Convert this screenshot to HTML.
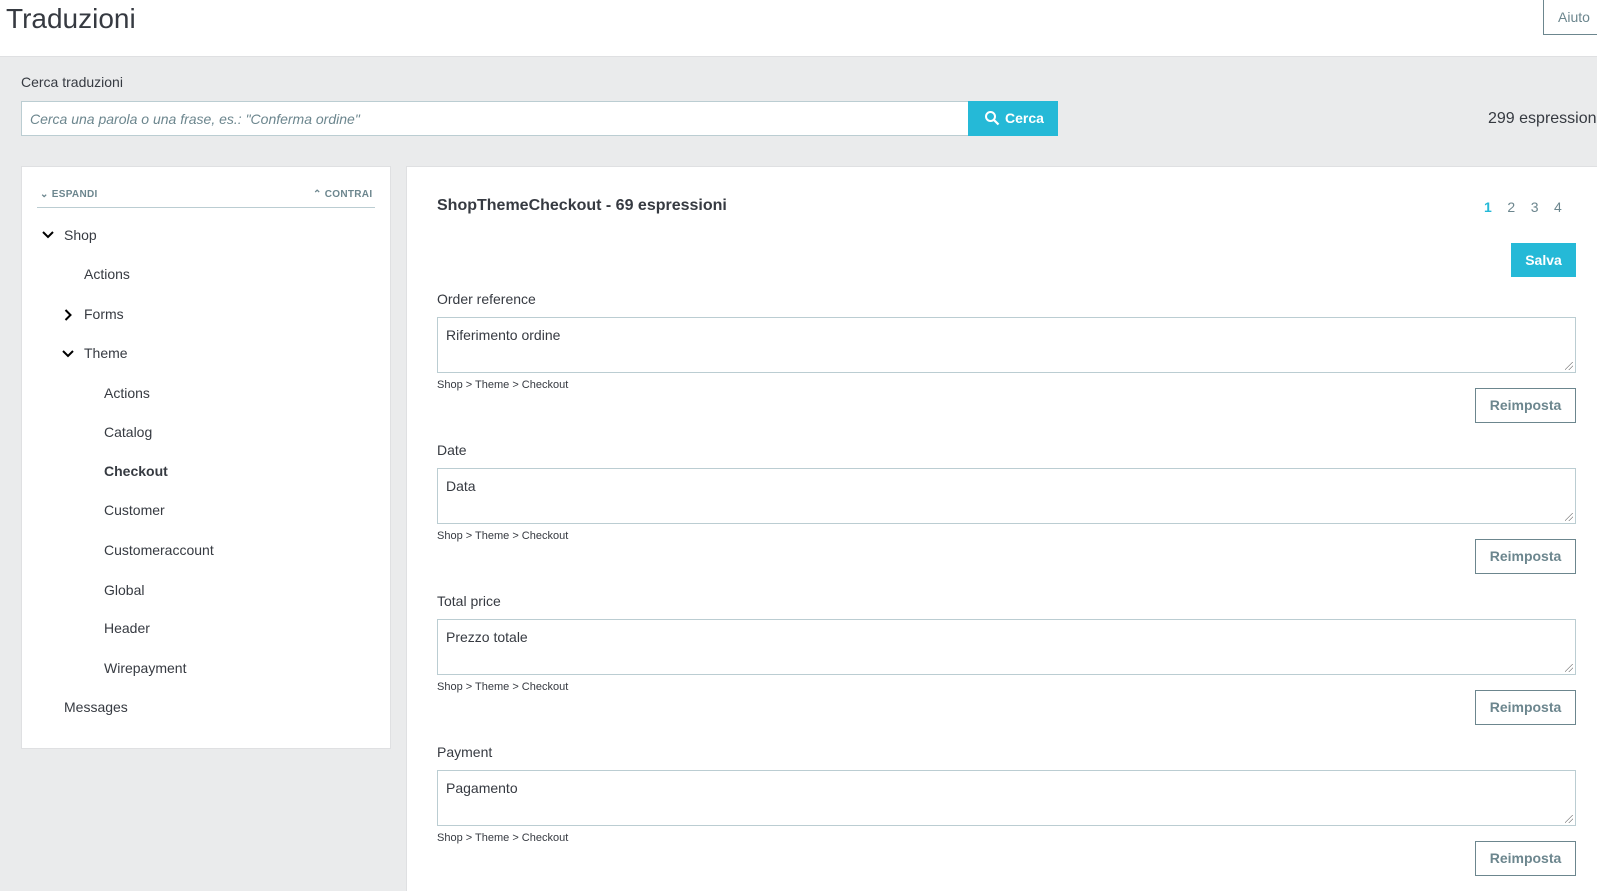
<!DOCTYPE html>
<html style="overflow:hidden;height:891px"><head><meta charset="utf-8"><style>
*{box-sizing:border-box;margin:0;padding:0}
body{width:1597px;height:891px;overflow:hidden;background:#eaebec;font-family:"Liberation Sans",sans-serif;color:#363a41;position:relative;font-size:14px}
.a{position:absolute;white-space:nowrap}
.hdr{left:0;top:0;width:1597px;height:57px;background:#fff;border-bottom:1px solid #dfe0e2}
.ta{position:absolute;left:437px;width:1139px;height:56px;background:#fff;border:1px solid #bbcdd2;padding:9px 8px;font-size:14px}
.ta:after{content:"";position:absolute;right:2px;bottom:2px;width:8px;height:8px;background:linear-gradient(135deg,transparent 45%,#888 46%,#888 52%,transparent 53%,transparent 70%,#888 71%,#888 77%,transparent 78%)}
.rs{position:absolute;left:1475px;width:101px;height:35px;border:1px solid #6c868e;background:#fff;color:#6c868e;font-size:14px;font-weight:bold;text-align:center;line-height:33px}
.bc{font-size:11px;color:#363a41}
.tree{font-size:14px}
</style></head><body>
<div class="a hdr"></div>
<div class="a" style="left:6px;top:3px;font-size:28px;color:#363a41">Traduzioni</div>
<div class="a" style="left:1543px;top:0;width:54px;height:35px;border:1px solid #6c868e;border-top:none;border-right:none;background:#fff;color:#6c868e;font-size:14px;padding:9px 0 0 14px">Aiuto</div>
<div class="a" style="left:21px;top:74px;font-size:14px">Cerca traduzioni</div>
<div class="a" style="left:21px;top:101px;width:948px;height:35px;background:#fff;border:1px solid #bbcdd2;padding:9px 8px;font-style:italic;color:#6c868e;font-size:14px">Cerca una parola o una frase, es.: "Conferma ordine"</div>
<div class="a" style="left:968px;top:101px;width:90px;height:35px;background:#25b9d7;color:#fff;font-weight:bold;font-size:14px;padding:9px 0 0 16px"><svg width="16" height="16" viewBox="0 0 16 16" style="vertical-align:-3px;margin-right:5px"><circle cx="6.5" cy="6.5" r="4.5" fill="none" stroke="#fff" stroke-width="2"/><path d="M10 10l4.5 4.5" stroke="#fff" stroke-width="2.2"/></svg>Cerca</div>
<div class="a" style="left:1488px;top:110px;font-size:16px">299 espressioni</div>

<div class="a" style="left:21px;top:166px;width:370px;height:583px;background:#fff;border:1px solid #dfe0e2"></div>
<div class="a" style="left:40px;top:189px;font-size:10px;font-weight:bold;color:#6c868e;letter-spacing:.3px">&#8964; ESPANDI</div>
<div class="a" style="left:313px;top:189px;font-size:10px;font-weight:bold;color:#6c868e;letter-spacing:.3px">&#8963; CONTRAI</div>
<div class="a" style="left:37px;top:207px;width:338px;height:1px;background:#bbcdd2"></div>
<div class="tree">
<svg class="a" style="left:42px;top:231px" width="12" height="8"><path d="M1 1l5 5 5-5" fill="none" stroke="#000" stroke-width="2"/></svg>
<div class="a" style="left:64px;top:227px">Shop</div>
<div class="a" style="left:84px;top:266px">Actions</div>
<svg class="a" style="left:64px;top:309px" width="8" height="12"><path d="M1.5 1l5 5-5 5" fill="none" stroke="#000" stroke-width="2"/></svg>
<div class="a" style="left:84px;top:306px">Forms</div>
<svg class="a" style="left:62px;top:350px" width="12" height="8"><path d="M1 1l5 5 5-5" fill="none" stroke="#000" stroke-width="2"/></svg>
<div class="a" style="left:84px;top:345px">Theme</div>
<div class="a" style="left:104px;top:385px">Actions</div>
<div class="a" style="left:104px;top:424px">Catalog</div>
<div class="a" style="left:104px;top:463px;font-weight:bold">Checkout</div>
<div class="a" style="left:104px;top:502px">Customer</div>
<div class="a" style="left:104px;top:542px">Customeraccount</div>
<div class="a" style="left:104px;top:582px">Global</div>
<div class="a" style="left:104px;top:620px">Header</div>
<div class="a" style="left:104px;top:660px">Wirepayment</div>
<div class="a" style="left:64px;top:699px">Messages</div>
</div>

<div class="a" style="left:406px;top:166px;width:1191px;height:725px;background:#fff;border:1px solid #dfe0e2;border-bottom:none;border-right:none"></div>
<div class="a" style="left:437px;top:197px;font-size:16px;font-weight:bold">ShopThemeCheckout - 69 espressioni</div>
<div class="a" style="left:1484px;top:199px;font-size:14px;color:#6c868e"><b style="color:#25b9d7">1</b>&nbsp;&nbsp;&nbsp;&nbsp;2&nbsp;&nbsp;&nbsp;&nbsp;3&nbsp;&nbsp;&nbsp;&nbsp;4</div>
<div class="a" style="left:1511px;top:243px;width:65px;height:34px;background:#25b9d7;color:#fff;font-weight:bold;text-align:center;line-height:34px">Salva</div>

<div class="a" style="left:437px;top:291px">Order reference</div>
<div class="ta" style="top:317px">Riferimento ordine</div>
<div class="a bc" style="left:437px;top:379px">Shop &gt; Theme &gt; Checkout</div>
<div class="rs" style="top:388px">Reimposta</div>

<div class="a" style="left:437px;top:442px">Date</div>
<div class="ta" style="top:468px">Data</div>
<div class="a bc" style="left:437px;top:530px">Shop &gt; Theme &gt; Checkout</div>
<div class="rs" style="top:539px">Reimposta</div>

<div class="a" style="left:437px;top:593px">Total price</div>
<div class="ta" style="top:619px">Prezzo totale</div>
<div class="a bc" style="left:437px;top:681px">Shop &gt; Theme &gt; Checkout</div>
<div class="rs" style="top:690px">Reimposta</div>

<div class="a" style="left:437px;top:744px">Payment</div>
<div class="ta" style="top:770px">Pagamento</div>
<div class="a bc" style="left:437px;top:832px">Shop &gt; Theme &gt; Checkout</div>
<div class="rs" style="top:841px">Reimposta</div>
</body></html>
